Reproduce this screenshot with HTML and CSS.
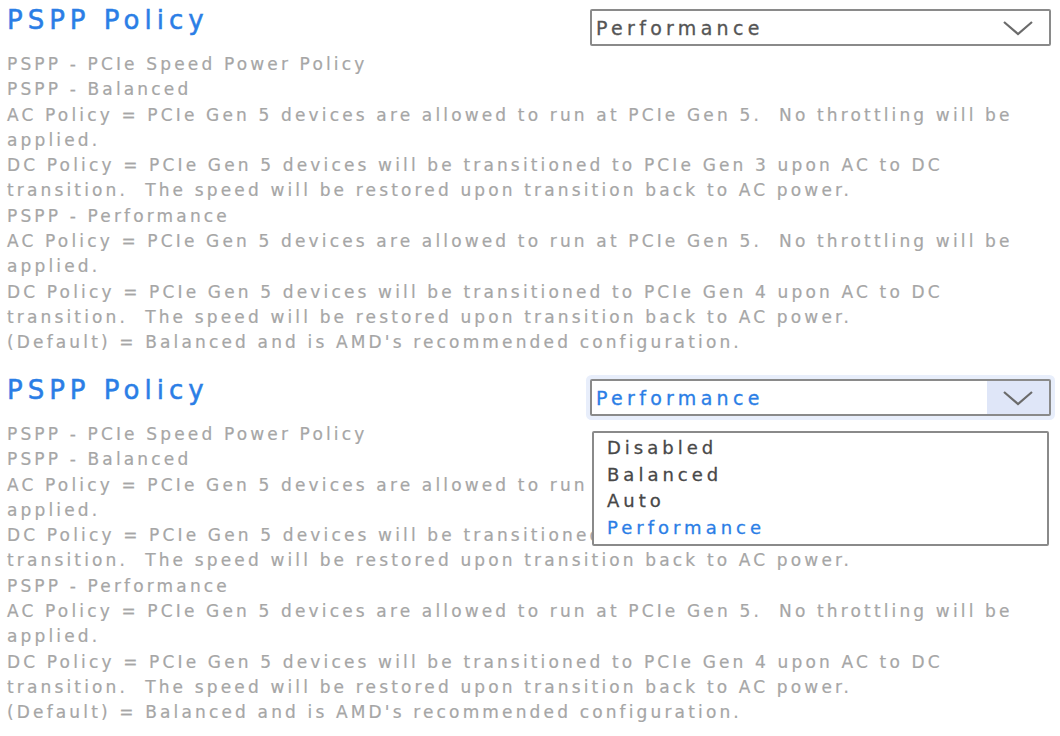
FILE: index.html
```html
<!DOCTYPE html>
<html lang="en">

<head>
    <meta charset="UTF-8">
    <meta name="viewport" content="width=device-width, initial-scale=1.0">
    <title>PSPP Policy</title>
    <link rel="stylesheet" href="styles.css">
</head>

<body>
    <div id="setup-page">
        <section class="setting">
            <div class="setting-head">
                <h2 class="setting-title">PSPP Policy</h2>
                <div class="select">
                    <span class="select-value">Performance</span>
                    <span class="select-arrow">
                        <svg width="32" height="16" viewBox="0 0 32 16"><polyline points="2,2 16,14 30,2" fill="none" stroke="#6b6b6b" stroke-width="2.2"/></svg>
                    </span>
                </div>
            </div>
            <div class="help">
                <div>PSPP - PCIe Speed Power Policy</div>
                <div>PSPP - Balanced</div>
                <div>AC Policy = PCIe Gen 5 devices are allowed to run at PCIe Gen 5.  No throttling will be</div>
                <div>applied.</div>
                <div>DC Policy = PCIe Gen 5 devices will be transitioned to PCIe Gen 3 upon AC to DC</div>
                <div>transition.  The speed will be restored upon transition back to AC power.</div>
                <div>PSPP - Performance</div>
                <div>AC Policy = PCIe Gen 5 devices are allowed to run at PCIe Gen 5.  No throttling will be</div>
                <div>applied.</div>
                <div>DC Policy = PCIe Gen 5 devices will be transitioned to PCIe Gen 4 upon AC to DC</div>
                <div>transition.  The speed will be restored upon transition back to AC power.</div>
                <div>(Default) = Balanced and is AMD's recommended configuration.</div>
            </div>
        </section>

        <section class="setting">
            <div class="setting-head">
                <h2 class="setting-title">PSPP Policy</h2>
                <div class="select focused">
                    <span class="select-value">Performance</span>
                    <span class="select-arrow">
                        <svg width="32" height="16" viewBox="0 0 32 16"><polyline points="2,2 16,14 30,2" fill="none" stroke="#6b6b6b" stroke-width="2.2"/></svg>
                    </span>
                    <ul class="options">
                        <li>Disabled</li>
                        <li>Balanced</li>
                        <li>Auto</li>
                        <li class="selected">Performance</li>
                    </ul>
                </div>
            </div>
            <div class="help">
                <div>PSPP - PCIe Speed Power Policy</div>
                <div>PSPP - Balanced</div>
                <div>AC Policy = PCIe Gen 5 devices are allowed to run at PCIe Gen 5.  No throttling will be</div>
                <div>applied.</div>
                <div>DC Policy = PCIe Gen 5 devices will be transitioned to PCIe Gen 3 upon AC to DC</div>
                <div>transition.  The speed will be restored upon transition back to AC power.</div>
                <div>PSPP - Performance</div>
                <div>AC Policy = PCIe Gen 5 devices are allowed to run at PCIe Gen 5.  No throttling will be</div>
                <div>applied.</div>
                <div>DC Policy = PCIe Gen 5 devices will be transitioned to PCIe Gen 4 upon AC to DC</div>
                <div>transition.  The speed will be restored upon transition back to AC power.</div>
                <div>(Default) = Balanced and is AMD's recommended configuration.</div>
            </div>
        </section>
    </div>
</body>

</html>
```

FILE: styles.css
```css
body {
    font-family: 'DejaVu Sans', 'Liberation Sans', sans-serif;
    margin: 0;
    background: #fff;
    overflow: hidden;
}

#setup-page {
    padding-left: 7px;
    width: 1044px;
}

.setting {
    height: 356px;
    margin-bottom: 14px;
}

.setting-head {
    display: flex;
    justify-content: space-between;
    align-items: flex-start;
    height: 52px;
}

.setting-title {
    margin: 4px 0 0 0;
    font-size: 26px;
    line-height: 32px;
    font-weight: normal;
    letter-spacing: 5px;
    color: #2b7ee6;
    -webkit-text-stroke: 0.5px #2b7ee6;
}

.select {
    position: relative;
    display: flex;
    align-items: center;
    justify-content: space-between;
    box-sizing: border-box;
    width: 461px;
    height: 37px;
    margin-top: 9px;
    border: 2px solid #8a8a8a;
    border-radius: 2px;
    background: #fff;
}

.select-value {
    padding-left: 4px;
    font-size: 19px;
    letter-spacing: 4.3px;
    color: #555;
    -webkit-text-stroke: 0.3px #555;
}

.select-arrow {
    display: flex;
    align-items: center;
    justify-content: center;
    width: 62px;
    height: 100%;
}

.select.focused {
    box-shadow: 0 0 0 4px #e8eefb;
}

.select.focused .select-value {
    color: #2b7ee6;
    -webkit-text-stroke-color: #2b7ee6;
}

.select.focused .select-arrow {
    background: #dfe6f8;
}

.options {
    position: absolute;
    top: 50px;
    left: 0;
    right: 0;
    margin: 0;
    padding: 2px 0 4px 13px;
    list-style: none;
    background: #fff;
    border: 2px solid #8a8a8a;
    border-radius: 2px;
    box-sizing: border-box;
    height: 115px;
}

.options li {
    font-size: 18px;
    line-height: 26.7px;
    letter-spacing: 4px;
    color: #484848;
    -webkit-text-stroke: 0.3px #484848;
}

.options li.selected {
    color: #2b7ee6;
    -webkit-text-stroke-color: #2b7ee6;
}

.help {
    font-size: 17px;
    line-height: 25.3px;
    letter-spacing: 3.15px;
    color: #a6a6a6;
}

.help div {
    white-space: pre;
    -webkit-text-stroke: 0.2px #a6a6a6;
}
```
